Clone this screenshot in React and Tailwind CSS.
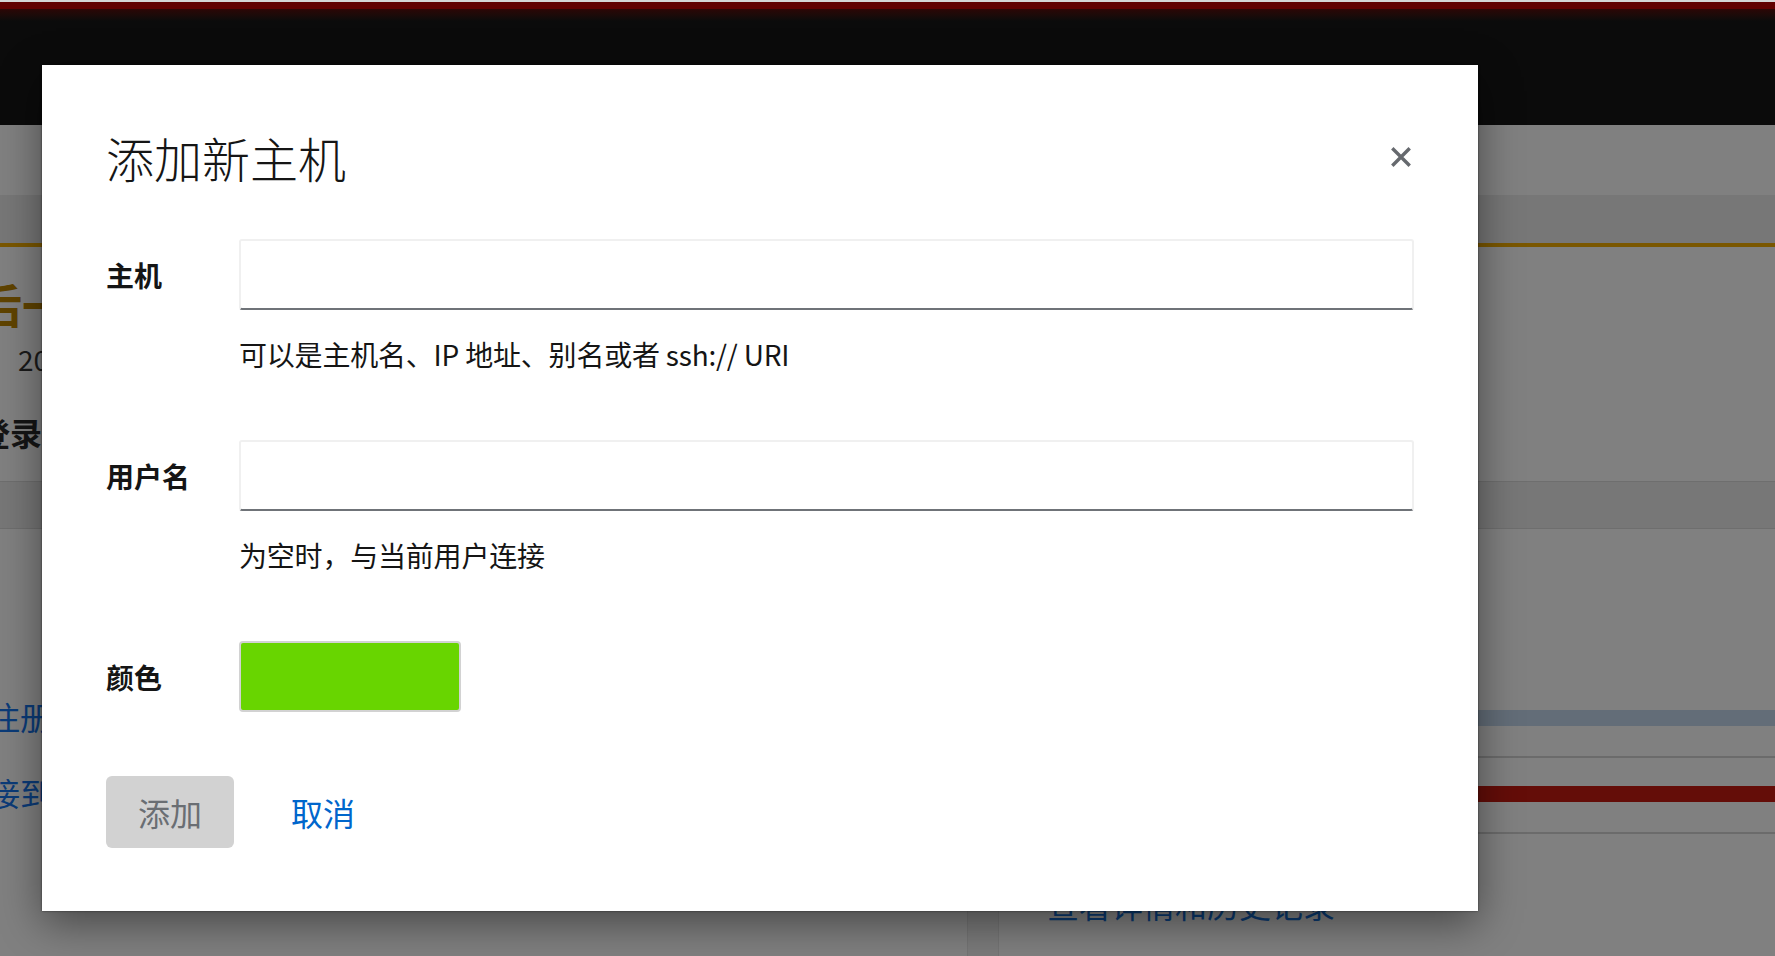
import React from "react";

function Field({ label, help }) {
  return (
    <div>
      <div className="flex h-[71px] items-center">
        <label className="w-[133px] shrink-0 text-[28px] font-bold leading-[42px] text-[#151515]">{label}</label>
        <input
          type="text"
          className="h-[71px] flex-1 rounded-[3px] border-2 border-[#f0f0f0] border-b-[#6f7378] bg-white px-4 text-[28px] outline-none"
        />
      </div>
      <p className="ml-[133px] mt-[23px] text-[28px] leading-[42px] tracking-[-0.2px] text-[#151515]">{help}</p>
    </div>
  );
}

export default function App() {
  return (
    <div className="relative h-[956px] w-full overflow-hidden bg-[#808080] font-['Noto_Sans_CJK_SC','Noto_Sans',sans-serif]">
      {/* page behind the backdrop (already dimmed) */}
      <div className="h-[2px] bg-[#d4d4d4]" />
      <div className="h-[7px] bg-[#600000]" />
      <div className="h-[12px] bg-gradient-to-b from-[#2c0606] to-[#0b0b0b]" />
      <div className="h-[104px] bg-[#0b0b0b]" />
      <div className="h-[70px] bg-[#808080]" />
      <div className="h-[48px] bg-[#777777]" />
      <div className="h-[4px] bg-[#7a5700]" />
      <div className="h-[234px] bg-[#808080]">
        <div className="w-[42px] overflow-hidden">
          <div className="ml-[-70px] pt-[28px] text-[46px] font-bold leading-[56px] text-[#5f4300] whitespace-nowrap">最后一次登录时间</div>
          <div className="ml-[18px] mt-[8px] text-[28px] leading-[40px] text-[#1a1a1a] whitespace-nowrap">2024-05-12 10:24</div>
          <div className="ml-[-22px] mt-[30px] text-[32px] font-bold leading-[46px] text-[#151515] whitespace-nowrap">登录记录</div>
        </div>
      </div>
      <div className="h-[48px] border-y border-[#6e6e6e] bg-[#777777]" />
      <div className="flex h-[427px]">
        <div className="w-[967px]">
          <div className="w-[42px] overflow-hidden">
            <div className="ml-[-12px] mt-[164px] text-[32px] leading-[46px] text-[#0b3b78] whitespace-nowrap">注册系统</div>
            <div className="ml-[-12px] mt-[30px] text-[32px] leading-[46px] text-[#0b3b78] whitespace-nowrap">接到洞察</div>
          </div>
        </div>
        <div className="w-[32px] border-x border-[#747474] bg-[#7b7b7b]" />
        <div className="flex-1">
          <div className="mt-[181px] h-[16px] bg-[#636d78]" />
          <div className="mt-[30px] h-[2px] bg-[#6b6b6b]" />
          <div className="mt-[28px] h-[16px] bg-[#640d08]" />
          <div className="mt-[30px] h-[2px] bg-[#6b6b6b]" />
          <div className="ml-[48px] mt-[49px] text-[32px] leading-[42px] text-[#0b3a70] whitespace-nowrap">查看详情和历史记录</div>
        </div>
      </div>

      {/* modal dialog */}
      <div className="absolute left-[42px] top-[65px] h-[846px] w-[1436px] bg-white px-[64px] pt-[63px] shadow-[0_0_2px_rgba(0,0,0,0.55),0_12px_40px_rgba(0,0,0,0.45)]">
        <h1 className="text-[48px] font-light leading-[58px] text-[#151515]">添加新主机</h1>
        <button className="absolute right-[67px] top-[82px] flex h-[20px] w-[20px] items-center justify-center" aria-label="关闭">
          <svg width="20" height="20" viewBox="0 0 20 20">
            <path d="M2.5 2.5 L17.5 17.5 M17.5 2.5 L2.5 17.5" stroke="#66696e" strokeWidth="3.4" strokeLinecap="square" />
          </svg>
        </button>

        <div className="mt-[53px] flex flex-col gap-[65px]">
          <Field label="主机" help="可以是主机名、IP 地址、别名或者 ssh:// URI" />
          <Field label="用户名" help="为空时，与当前用户连接" />
          <div className="flex h-[71px] items-center">
            <label className="w-[133px] shrink-0 text-[28px] font-bold leading-[42px] text-[#151515]">颜色</label>
            <div className="h-[71px] w-[222px] rounded-[4px] border-2 border-[#d2d2d2] bg-[#68d500]" />
          </div>
        </div>

        <div className="mt-[64px] flex items-center">
          <button className="h-[72px] w-[128px] rounded-[6px] bg-[#d2d2d2] text-[32px] leading-[42px] text-[#6a6e73]">添加</button>
          <button className="ml-[25px] h-[72px] px-[32px] text-[32px] leading-[42px] text-[#0066cc]">取消</button>
        </div>
      </div>
    </div>
  );
}
